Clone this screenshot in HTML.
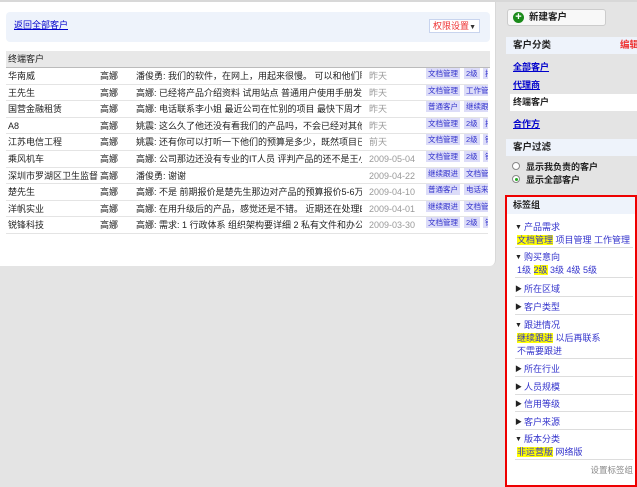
<!DOCTYPE html>
<html><head><meta charset="utf-8"><style>
*{margin:0;padding:0;box-sizing:border-box}
body{width:637px;height:487px;overflow:hidden;background:#e4e4e4;font-family:"Liberation Sans","Noto Sans CJK SC",sans-serif;font-size:9px;color:#222;position:relative}
.abs{position:absolute;white-space:nowrap}
#left{left:0;top:2px;width:496px;height:264px;background:#fff;border-radius:0 0 6px 0;border-right:1px solid #d8d8d8}
#blue{left:6px;top:12px;width:484px;height:30px;background:#eef3fb;border-radius:4px}
#blue a{position:absolute;left:8px;top:6px;color:#00c;text-decoration:underline}
#perm{right:10px;top:7px;position:absolute;background:#fff;border:1px solid #c8d4ee;color:#e33;padding:0 3px;height:14px;line-height:12px;font-size:9px}
#perm b{color:#333;font-size:7px}
#hdr{left:6px;top:51px;width:484px;height:17px;background:#e8e8e8;line-height:17px;padding-left:2px;border-bottom:1px solid #bbb}
.row{position:absolute;left:6px;width:482px;height:16.6px;border-bottom:1px solid #e4e4e4;line-height:16px;white-space:nowrap;overflow:hidden}
.row span{position:absolute;top:0}
.c1{left:2px}.c2{left:94px}.c3{left:130px;width:226px;overflow:hidden}.c4{left:363px;color:#999}
.tg{position:absolute;top:3px;height:11px;line-height:11px;background:#dcdcf8;color:#33c;font-size:7.5px;padding:0 2px}
#btn{left:507px;top:9px;width:99px;height:17px;background:#f8f8f8;border:1px solid #ccc;border-radius:3px;font-weight:bold;line-height:15px;padding-left:21px;font-size:9.5px}
#btn i{position:absolute;left:5px;top:2px;width:11px;height:11px;border-radius:50%;background:#1a8a1a;color:#fff;font-style:normal;font-size:11px;line-height:10px;text-align:center}
.sh{left:506px;width:131px;height:17px;background:#eef3fb;line-height:17px;padding-left:7px;font-weight:bold;color:#222;font-size:9.5px;overflow:hidden}
.lk{left:513px;color:#00c;text-decoration:underline;font-weight:bold}
#sel{left:510px;top:94px;width:127px;height:17px;background:#fff;line-height:17px;padding-left:3px;font-weight:bold}
.rad{left:512px;width:8px;height:8px;border:1px solid #888;border-radius:50%;background:#fff}
#tgb{left:505px;top:195px;width:132px;height:292px;border:2px solid #e00;background:#fff}
#tgh{position:absolute;left:0;top:0;width:128px;height:17px;background:#eef3fb;line-height:17px;padding-left:6px;font-weight:bold}
.ti{position:absolute;left:8px;width:118px;color:#33c;border-bottom:1px solid #ddd;line-height:13px;white-space:nowrap}
.ti .t{padding-left:9px;position:relative}
.ti .t:before{position:absolute;left:0;top:0;color:#222;font-size:7px}
.o .t:before{content:"▼"}.c .t:before{content:"▶"}
.sub{padding-left:2px}
.hl{background:#ff0;}
</style></head><body>
<div class="abs" style="left:0;top:0;width:637px;height:2px;background:#d8d8d8"></div>
<div id="left" class="abs"></div>
<div id="blue" class="abs"><a>返回全部客户</a><span id="perm">权限设置<b>▼</b></span></div>
<div id="hdr" class="abs">终端客户</div>

<div class="row" style="top:68px"><span class="c1">华南威</span><span class="c2">高娜</span><span class="c3">潘俊勇: 我们的软件，在网上，用起来很慢。 可以和他们聊</span><span class="c4">昨天</span><span class="tg" style="left:420px">文档管理</span><span class="tg" style="left:458px">2级</span><span class="tg" style="left:477px">排</span></div>
<div class="row" style="top:84.6px"><span class="c1">王先生</span><span class="c2">高娜</span><span class="c3">高娜: 已经将产品介绍资料 试用站点 普通用户使用手册发到</span><span class="c4">昨天</span><span class="tg" style="left:420px">文档管理</span><span class="tg" style="left:458px">工作管</span></div>
<div class="row" style="top:101.2px"><span class="c1">国营金融租赁</span><span class="c2">高娜</span><span class="c3">高娜: 电话联系李小姐 最近公司在忙别的项目 最快下周才能</span><span class="c4">昨天</span><span class="tg" style="left:420px">普通客户</span><span class="tg" style="left:458px">继续跟</span></div>
<div class="row" style="top:117.8px"><span class="c1">A8</span><span class="c2">高娜</span><span class="c3">姚震: 这么久了他还没有看我们的产品吗，不会已经对其他</span><span class="c4">昨天</span><span class="tg" style="left:420px">文档管理</span><span class="tg" style="left:458px">2级</span><span class="tg" style="left:477px">排</span></div>
<div class="row" style="top:134.4px"><span class="c1">江苏电信工程</span><span class="c2">高娜</span><span class="c3">姚震: 还有你可以打听一下他们的预算是多少，既然项目已经</span><span class="c4">前天</span><span class="tg" style="left:420px">文档管理</span><span class="tg" style="left:458px">2级</span><span class="tg" style="left:477px">铁</span></div>
<div class="row" style="top:151px"><span class="c1">乘风机车</span><span class="c2">高娜</span><span class="c3">高娜: 公司那边还没有专业的IT人员 评判产品的还不是王小</span><span class="c4">2009-05-04</span><span class="tg" style="left:420px">文档管理</span><span class="tg" style="left:458px">2级</span><span class="tg" style="left:477px">铁</span></div>
<div class="row" style="top:167.6px"><span class="c1">深圳市罗湖区卫生监督</span><span class="c2">高娜</span><span class="c3">潘俊勇: 谢谢</span><span class="c4">2009-04-22</span><span class="tg" style="left:420px">继续跟进</span><span class="tg" style="left:458px">文档管</span></div>
<div class="row" style="top:184.2px"><span class="c1">楚先生</span><span class="c2">高娜</span><span class="c3">高娜: 不是 前期报价是楚先生那边对产品的预算报价5-6万</span><span class="c4">2009-04-10</span><span class="tg" style="left:420px">普通客户</span><span class="tg" style="left:458px">电话来</span></div>
<div class="row" style="top:200.8px"><span class="c1">洋帆实业</span><span class="c2">高娜</span><span class="c3">高娜: 在用升级后的产品，感觉还是不错。 近期还在处理EI</span><span class="c4">2009-04-01</span><span class="tg" style="left:420px">继续跟进</span><span class="tg" style="left:458px">文档管</span></div>
<div class="row" style="top:217.4px"><span class="c1">锐锋科技</span><span class="c2">高娜</span><span class="c3">高娜: 需求: 1 行政体系 组织架构要详细 2 私有文件和办公</span><span class="c4">2009-03-30</span><span class="tg" style="left:420px">文档管理</span><span class="tg" style="left:458px">2级</span><span class="tg" style="left:477px">铁</span></div>

<div id="btn" class="abs"><i>+</i>新建客户</div>
<div class="abs sh" style="top:37px">客户分类<span style="position:absolute;left:114px;color:#e33">编辑</span></div>
<div class="abs lk" style="top:60px">全部客户</div>
<div class="abs lk" style="top:78px">代理商</div>
<div id="sel" class="abs">终端客户</div>
<div class="abs lk" style="top:117px">合作方</div>
<div class="abs sh" style="top:139px">客户过滤</div>
<div class="abs rad" style="top:162px"></div><div class="abs" style="left:526px;top:160px;font-weight:bold">显示我负责的客户</div>
<div class="abs rad" style="top:175px"><div style="width:3px;height:3px;background:#2a2;border-radius:50%;margin:1.5px"></div></div><div class="abs" style="left:526px;top:173px;font-weight:bold">显示全部客户</div>

<div id="tgb" class="abs">
<div id="tgh">标签组</div>
<div class="ti o" style="top:24px"><div class="t">产品需求</div><div class="sub"><span class="hl">文档管理</span> 项目管理 工作管理</div></div>
<div class="ti o" style="top:54px"><div class="t">购买意向</div><div class="sub">1级 <span class="hl">2级</span> 3级 4级 5级</div></div>
<div class="ti c" style="top:86px"><div class="t">所在区域</div></div>
<div class="ti c" style="top:104px"><div class="t">客户类型</div></div>
<div class="ti o" style="top:122px"><div class="t">跟进情况</div><div class="sub"><span class="hl">继续跟进</span> 以后再联系</div><div class="sub">不需要跟进</div></div>
<div class="ti c" style="top:166px"><div class="t">所在行业</div></div>
<div class="ti c" style="top:184px"><div class="t">人员规模</div></div>
<div class="ti c" style="top:201px"><div class="t">信用等级</div></div>
<div class="ti c" style="top:219px"><div class="t">客户来源</div></div>
<div class="ti o" style="top:236px"><div class="t">版本分类</div><div class="sub"><span class="hl">非运营版</span> 网络版</div></div>
<div style="position:absolute;right:2px;top:267px;color:#888;font-size:8.5px">设置标签组</div>
</div>
</body></html>
